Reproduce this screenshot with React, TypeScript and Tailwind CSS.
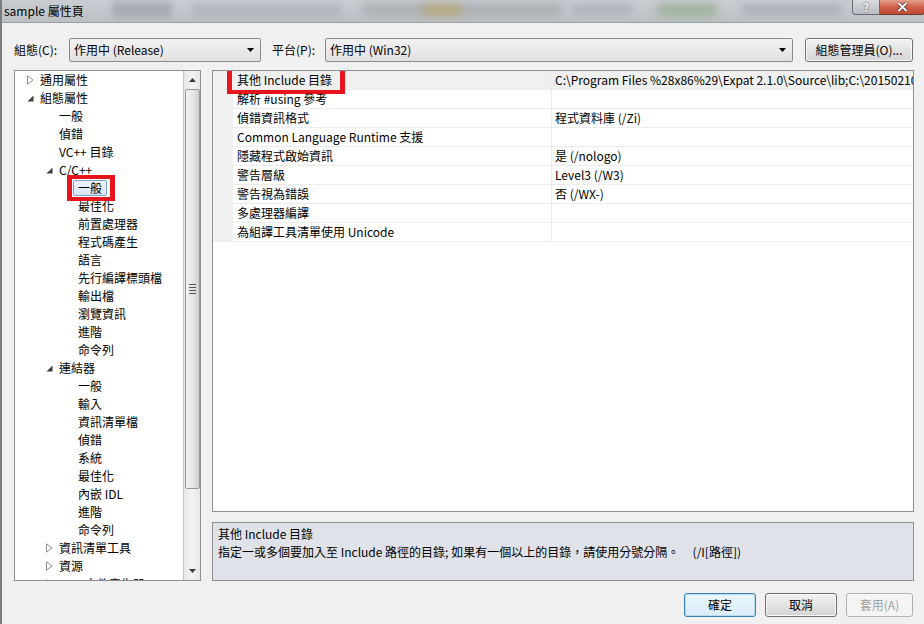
import React from "react";

type Node = { t: string; l: number; a?: "open" | "closed"; sel?: boolean };

const tree: Node[] = [
  { t: "通用屬性", l: 0, a: "closed" },
  { t: "組態屬性", l: 0, a: "open" },
  { t: "一般", l: 1 },
  { t: "偵錯", l: 1 },
  { t: "VC++ 目錄", l: 1 },
  { t: "C/C++", l: 1, a: "open" },
  { t: "一般", l: 2, sel: true },
  { t: "最佳化", l: 2 },
  { t: "前置處理器", l: 2 },
  { t: "程式碼產生", l: 2 },
  { t: "語言", l: 2 },
  { t: "先行編譯標頭檔", l: 2 },
  { t: "輸出檔", l: 2 },
  { t: "瀏覽資訊", l: 2 },
  { t: "進階", l: 2 },
  { t: "命令列", l: 2 },
  { t: "連結器", l: 1, a: "open" },
  { t: "一般", l: 2 },
  { t: "輸入", l: 2 },
  { t: "資訊清單檔", l: 2 },
  { t: "偵錯", l: 2 },
  { t: "系統", l: 2 },
  { t: "最佳化", l: 2 },
  { t: "內嵌 IDL", l: 2 },
  { t: "進階", l: 2 },
  { t: "命令列", l: 2 },
  { t: "資訊清單工具", l: 1, a: "closed" },
  { t: "資源", l: 1, a: "closed" },
  { t: "XML 文件產生器", l: 1, a: "closed" },
];

const props: [string, string][] = [
  ["其他 Include 目錄", "C:\\Program Files %28x86%29\\Expat 2.1.0\\Source\\lib;C:\\20150210\\include;%(AdditionalIncludeDirectories)"],
  ["解析 #using 參考", ""],
  ["偵錯資訊格式", "程式資料庫 (/Zi)"],
  ["Common Language Runtime 支援", ""],
  ["隱藏程式啟始資訊", "是 (/nologo)"],
  ["警告層級", "Level3 (/W3)"],
  ["警告視為錯誤", "否 (/WX-)"],
  ["多處理器編譯", ""],
  ["為組譯工具清單使用 Unicode", ""],
];

function Arrow({ a }: { a?: "open" | "closed" }) {
  if (a === "closed")
    return (
      <svg width="7" height="10" viewBox="0 0 7 10" className="shrink-0">
        <path d="M0.5 0.8 L6 5 L0.5 9.2 Z" fill="#fff" stroke="#8f8f8f" strokeWidth="1" />
      </svg>
    );
  if (a === "open")
    return (
      <svg width="7" height="7" viewBox="0 0 7 7" className="shrink-0">
        <path d="M6.5 0.5 L6.5 6.5 L0.5 6.5 Z" fill="#3c3c3c" />
      </svg>
    );
  return null;
}

function Combo({ text, w }: { text: string; w: string }) {
  return (
    <div
      className={`${w} shrink-0 h-[24px] flex items-center justify-between rounded-[2px] border border-[#8b8b8b] bg-gradient-to-b from-[#f3f3f3] to-[#e0e0e0] pl-[4px] pr-[6px]`}
    >
      <span className="text-[12px] leading-[16px] text-black">{text}</span>
      <svg width="7" height="4" viewBox="0 0 7 4">
        <path d="M0 0 L7 0 L3.5 4 Z" fill="#000" />
      </svg>
    </div>
  );
}

function Btn({ label, focus, disabled }: { label: string; focus?: boolean; disabled?: boolean }) {
  return (
    <div
      className={`h-[24px] flex items-center justify-center rounded-[3px] border text-[12px] leading-[16px] ${
        focus
          ? "border-[#3c7fb1] bg-gradient-to-b from-[#eaf6fd] to-[#d9ecf8] shadow-[inset_0_0_0_1px_#b6dcf5]"
          : disabled
          ? "border-[#adb2b5] bg-[#f4f4f4] text-[#a0a0a0]"
          : "border-[#707070] bg-gradient-to-b from-[#f2f2f2] to-[#d5d5d5] shadow-[inset_0_0_0_1px_#fbfbfb]"
      }`}
    >
      {label}
    </div>
  );
}

export default function App() {
  return (
    <div className="w-[924px] h-[624px] overflow-hidden bg-[#f0f0f0] flex flex-col font-['Noto_Sans_CJK_TC','Noto_Sans',sans-serif] text-black border-l-2 border-[#7a7d82]">
      {/* title bar */}
      <div className="relative h-[23px] shrink-0 flex items-start justify-between bg-gradient-to-b from-[#c9ccd1] to-[#bcc0c5] overflow-hidden border-b border-[#9a9ea3]">
        <div className="absolute left-[110px] top-[2px] w-[60px] h-[16px] rounded bg-[#a9adb3] blur-[3px]" />
        <div className="absolute left-[190px] top-[4px] w-[150px] h-[14px] rounded bg-[#b4b8be] blur-[3px]" />
        <div className="absolute left-[360px] top-[3px] w-[200px] h-[14px] rounded bg-[#aeb2b6] blur-[4px]" />
        <div className="absolute left-[420px] top-[5px] w-[40px] h-[10px] rounded bg-[#b9a87a] blur-[4px]" />
        <div className="absolute left-[570px] top-[4px] w-[60px] h-[12px] rounded bg-[#b0b6bb] blur-[3px]" />
        <div className="absolute left-[655px] top-[4px] w-[60px] h-[12px] rounded bg-[#9fb29b] blur-[4px]" />
        <div className="absolute left-[740px] top-[4px] w-[100px] h-[12px] rounded bg-[#b0b4ba] blur-[3px]" />
        <span className="relative ml-[2px] mt-[3px] text-[12px] leading-[16px] text-black">sample 屬性頁</span>
        <div className="relative flex mr-[-1px]">
          <div className="w-[28px] h-[15px] flex items-center justify-center rounded-bl-[4px] border border-t-0 border-[#6a6e73] bg-gradient-to-b from-[#d9dce0] to-[#b9bdc3] text-[11px] leading-[12px] font-bold text-white [text-shadow:0_0_2px_#333]">
            ?
          </div>
          <div className="w-[45px] h-[15px] flex items-center justify-center rounded-br-[4px] border border-l-0 border-t-0 border-[#6a3a33] bg-gradient-to-b from-[#e3a08f] via-[#d0604a] to-[#c24a33]">
            <svg width="11" height="10" viewBox="0 0 11 10">
              <path d="M1.5 1 L9.5 9 M9.5 1 L1.5 9" stroke="#4a2a25" strokeWidth="3.4" />
              <path d="M1.5 1 L9.5 9 M9.5 1 L1.5 9" stroke="#fff" strokeWidth="2" />
            </svg>
          </div>
        </div>
      </div>

      {/* body */}
      <div className="flex-1 flex flex-col pl-[12px] pr-[10px]">
        {/* top row */}
        <div className="mt-[15px] h-[24px] flex items-center text-[12px] leading-[16px]">
          <span className="w-[55px] shrink-0">組態(C):</span>
          <Combo text="作用中 (Release)" w="w-[192px]" />
          <span className="ml-[11px] w-[53px] shrink-0">平台(P):</span>
          <Combo text="作用中 (Win32)" w="w-[468px]" />
          <div className="ml-[12px] w-[108px] shrink-0">
            <Btn label="組態管理員(O)..." />
          </div>
        </div>

        {/* main area */}
        <div className="mt-[8px] h-[511px] flex gap-[11px]">
          {/* tree */}
          <div className="w-[187px] shrink-0 h-full border border-[#8e8f92] bg-white flex overflow-hidden">
            <div className="flex-1 min-w-0 overflow-hidden">
              {tree.map((n, i) => (
                <div
                  key={i}
                  className="h-[18px] flex items-center text-[12px] leading-[16px] whitespace-nowrap"
                  style={{ paddingLeft: 9 + n.l * 19 }}
                >
                  <div className="w-[16px] shrink-0 flex items-center justify-start pl-[3px]">
                    <Arrow a={n.a} />
                  </div>
                  {n.sel ? (
                    <span className="relative -ml-[5px] px-[4px] h-[16px] flex items-center rounded-[2px] border border-[#7da2ce] bg-gradient-to-b from-[#eef5fd] to-[#d6e6f9]">
                      {n.t}
                      <span className="absolute left-[-7px] top-[-6px] w-[48px] h-[26px] border-x-[5px] border-y-[4px] border-[#e8141c]" />
                    </span>
                  ) : (
                    <span>{n.t}</span>
                  )}
                </div>
              ))}
            </div>
            {/* scrollbar */}
            <div className="w-[17px] h-full shrink-0 border-l border-[#c4c4c4] bg-gradient-to-r from-[#e6e6e6] via-[#f3f3f3] to-[#e6e6e6] flex flex-col items-center">
              <div className="h-[18px] w-full flex items-center justify-center">
                <svg width="7" height="4" viewBox="0 0 7 4">
                  <path d="M3.5 0 L7 4 L0 4 Z" fill="#3a3a3a" />
                </svg>
              </div>
              <div className="h-[400px] w-[15px] rounded-[2px] border border-[#979797] bg-gradient-to-r from-[#f2f2f2] via-[#e6e6e6] to-[#cfcfcf] flex items-center justify-center">
                <div className="flex flex-col gap-[2px]">
                  <div className="w-[7px] h-px bg-[#555]" />
                  <div className="w-[7px] h-px bg-[#555]" />
                  <div className="w-[7px] h-px bg-[#555]" />
                  <div className="w-[7px] h-px bg-[#555]" />
                </div>
              </div>
              <div className="flex-1" />
              <div className="h-[18px] w-full flex items-center justify-center">
                <svg width="7" height="4" viewBox="0 0 7 4">
                  <path d="M0 0 L7 0 L3.5 4 Z" fill="#3a3a3a" />
                </svg>
              </div>
            </div>
          </div>

          {/* right column */}
          <div className="flex-1 min-w-0 flex flex-col">
            <div className="h-[442px] border border-[#8e8f92] bg-white overflow-hidden">
              {props.map(([k, v], i) => (
                <div key={i} className="h-[19px] flex text-[12px] leading-[16px] whitespace-nowrap">
                  <div className="w-[20px] shrink-0 bg-[#f0f0f0]" />
                  <div
                    className={`w-[319px] shrink-0 flex items-center pl-[4px] border-b border-r border-[#ececec] ${
                      i === 0 ? "bg-[#f0f0f0]" : ""
                    }`}
                  >
                    <span className="relative">
                      {k}
                      {i === 0 && (
                        <span className="absolute left-[-10px] top-[-5px] w-[118px] h-[27px] border-x-[5px] border-y-[4px] border-[#e8141c]" />
                      )}
                    </span>
                  </div>
                  <div
                    className={`flex-1 min-w-0 flex items-center pl-[3px] overflow-hidden border-b border-[#ececec] ${
                      i === 0 ? "bg-[#f0f0f0]" : ""
                    }`}
                  >
                    {v}
                  </div>
                </div>
              ))}
            </div>
            <div className="mt-[10px] h-[59px] border border-[#8e8f92] bg-[#dfe2e8] px-[5px] pt-[2px] text-[12px] leading-[18px] whitespace-nowrap overflow-hidden">
              <div>其他 Include 目錄</div>
              <div>指定一或多個要加入至 Include 路徑的目錄; 如果有一個以上的目錄，請使用分號分隔。&nbsp;&nbsp;&nbsp;&nbsp;&nbsp;(/I[路徑])</div>
            </div>
          </div>
        </div>

        {/* bottom buttons */}
        <div className="mt-[12px] flex justify-end gap-[9px] pr-[1px]">
          <div className="w-[72px]">
            <Btn label="確定" focus />
          </div>
          <div className="w-[72px]">
            <Btn label="取消" />
          </div>
          <div className="w-[67px]">
            <Btn label="套用(A)" disabled />
          </div>
        </div>
      </div>
    </div>
  );
}
